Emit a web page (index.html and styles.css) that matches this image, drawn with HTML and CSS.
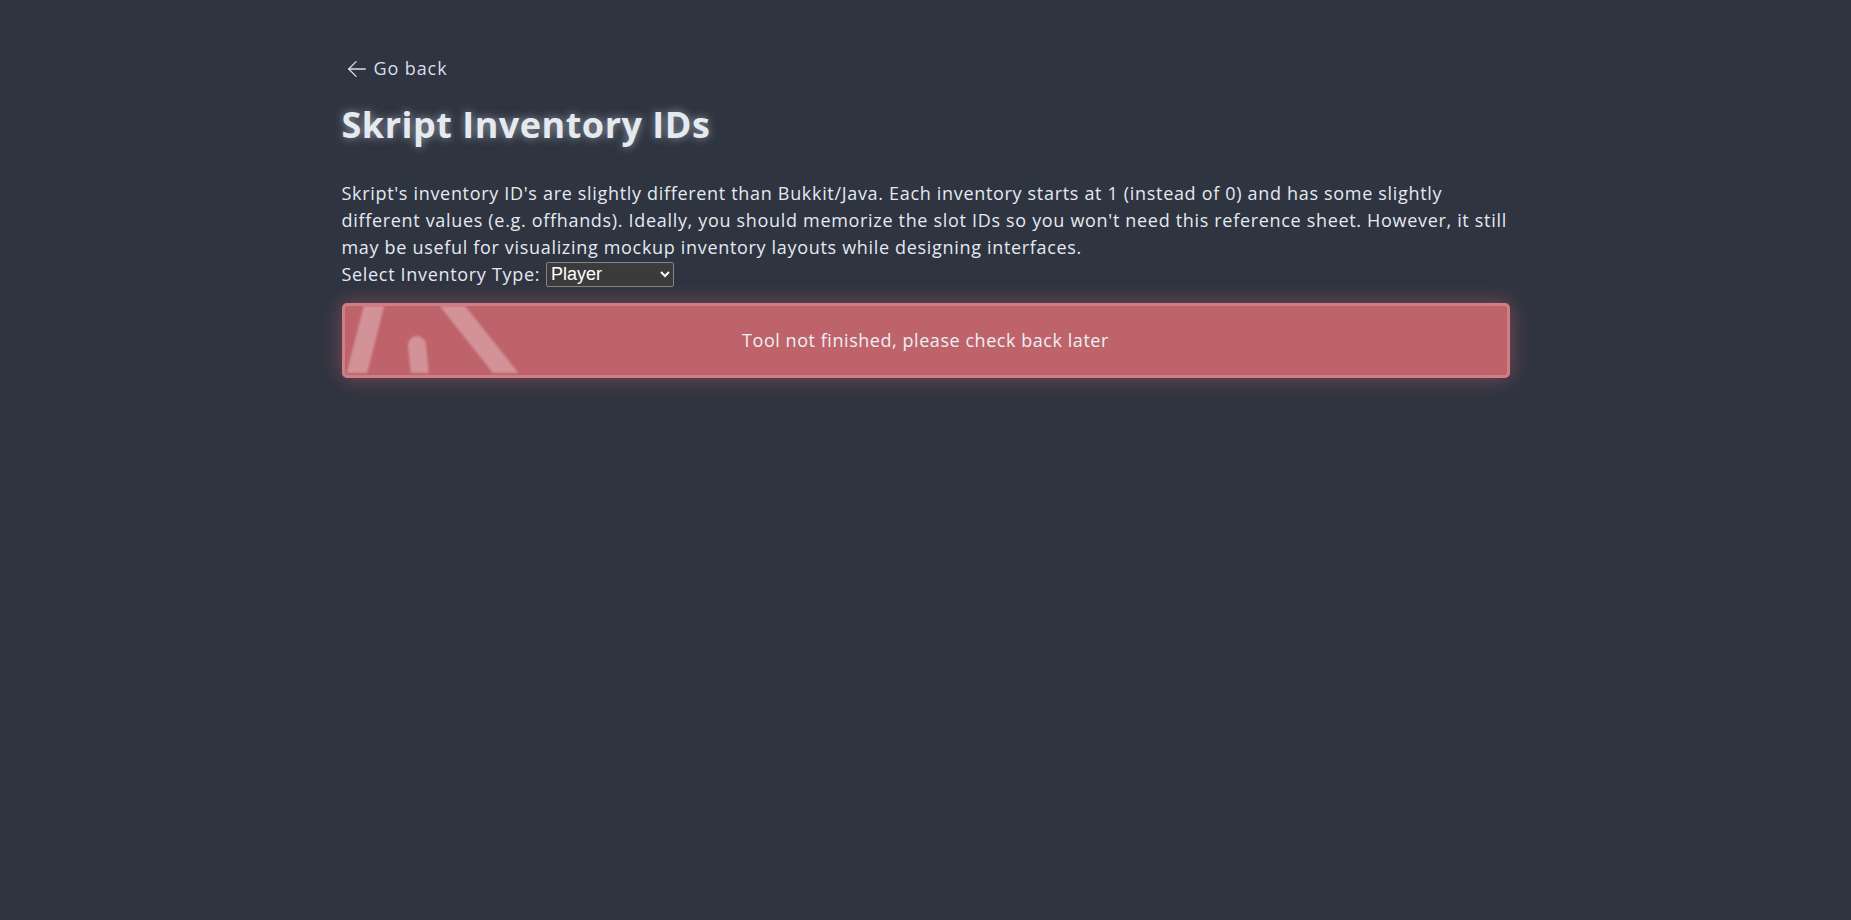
FILE: index.html
```html
<!DOCTYPE html>
<html lang="en">
<head>
<meta charset="utf-8">
<title>Skript Inventory IDs</title>
<link rel="stylesheet" href="styles.css">
</head>
<body>
<main class="page">
  <a class="back" href="#">
    <svg class="back-icon" viewBox="0 0 24 24" width="22" height="22" fill="none" stroke="currentColor" stroke-width="1.4" stroke-linecap="round" stroke-linejoin="round"><path d="M21 12H3"/><path d="M11 4l-8 8 8 8"/></svg>
    <span>Go back</span>
  </a>
  <h1 class="title">Skript Inventory IDs</h1>
  <p class="intro">Skript's inventory ID's are slightly different than Bukkit/Java. Each inventory starts at 1 (instead of 0) and has some slightly different values (e.g. offhands). Ideally, you should memorize the slot IDs so you won't need this reference sheet. However, it still may be useful for visualizing mockup inventory layouts while designing interfaces.<br>
  <label class="picker">Select Inventory Type: <select class="select"><option>Player</option><option>Chest</option><option>Hopper</option><option>Dispenser</option></select></label></p>
  <div class="alert">
    <svg class="alert-deco" viewBox="0 0 240 67" width="240" height="67" fill="none" stroke="#ffffff" stroke-width="20" stroke-linecap="round"><path d="M1 110 L36.6 -30"/><path d="M83.5 -30 L195 110"/><path d="M72 39 L79 110" stroke-width="18"/></svg>
    <span class="alert-text">Tool not finished, please check back later</span>
  </div>
</main>
</body>
</html>
```
FILE: styles.css
```css
html, body {
  margin: 0;
  padding: 0;
}
body {
  background: #2e3440;
  color: #e5e9f0;
  font-family: "Open Sans", "Liberation Sans", sans-serif;
  font-size: 18px;
  letter-spacing: 0.55px;
  line-height: 27px;
  min-height: 920px;
}
.page {
  width: 1168px;
  margin: 0 auto;
  padding-top: 55px;
}
.back {
  display: inline-flex;
  align-items: center;
  gap: 6px;
  color: #d8dee9;
  text-decoration: none;
  font-size: 18px;
  letter-spacing: 0.9px;
  line-height: 27px;
  margin-left: 4px;
}
.back-icon {
  display: block;
}
.title {
  margin: 16px 0 0;
  font-size: 36px;
  line-height: 44px;
  font-weight: 700;
  letter-spacing: 0.5px;
  color: #e5e9f0;
  text-shadow: 0 0 10px rgba(229, 233, 240, 0.55);
}
.intro {
  margin: 33px 0 0;
  letter-spacing: 0.68px;
}
.picker {
  display: inline-flex;
  align-items: center;
  gap: 6px;
}
.select {
  color-scheme: dark;
  width: 128px;
  height: 25px;
  font-family: "Liberation Sans", Arial, sans-serif;
  font-size: 18px;
  letter-spacing: 0;
  vertical-align: middle;
}
.alert {
  position: relative;
  overflow: hidden;
  margin-top: 15px;
  background: #bf636b;
  border: 3px solid #d17d85;
  border-radius: 5px;
  padding: 21px 0;
  text-align: center;
  box-shadow: 0 0 22px rgba(191, 97, 106, 0.55);
}
.alert-deco {
  position: absolute;
  left: 0;
  top: 0;
  opacity: 0.3;
  filter: blur(1px);
}
.alert-text {
  position: relative;
  color: #eceff4;
}
```
